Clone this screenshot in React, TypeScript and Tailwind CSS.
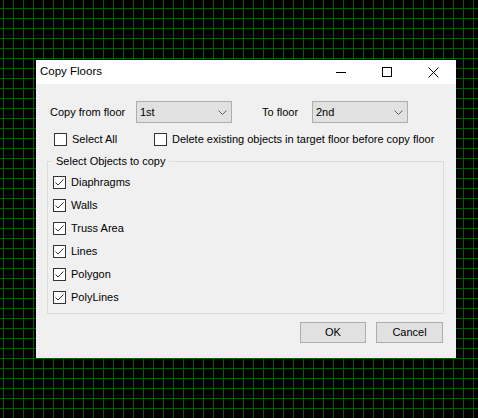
import React from "react";

const items = ["Diaphragms", "Walls", "Truss Area", "Lines", "Polygon", "PolyLines"];

function CheckBox({ checked, label }: { checked?: boolean; label: string }) {
  return (
    <label className="flex h-[13px] items-center">
      <span className="flex h-[13px] w-[13px] items-center justify-center border border-[#333333] bg-white">
        {checked ? (
          <svg width="11" height="11" viewBox="0 0 11 11">
            <path d="M1.5 5.5 L4 8 L9.5 2.5" fill="none" stroke="#333333" strokeWidth="1" />
          </svg>
        ) : null}
      </span>
      <span className="ml-[5px] leading-[13px]">{label}</span>
    </label>
  );
}

function Combo({ value }: { value: string }) {
  return (
    <div className="flex h-[22px] w-[96px] items-center justify-between border border-[#adadad] bg-[#e1e1e1] pl-[3px] pr-[4px]">
      <span>{value}</span>
      <svg width="9" height="5" viewBox="0 0 9 5">
        <path d="M0.5 0.5 L4.5 4.5 L8.5 0.5" fill="none" stroke="#606060" strokeWidth="1" />
      </svg>
    </div>
  );
}

function TitleButton({ children }: { children: React.ReactNode }) {
  return <div className="flex h-[24px] w-[46px] items-center justify-center">{children}</div>;
}

export default function App() {
  return (
    <div className="h-[418px] w-[478px] overflow-hidden bg-black bg-[linear-gradient(to_right,#006000_1px,transparent_1px),linear-gradient(to_bottom,#006000_1px,transparent_1px)] bg-[size:10px_10px] bg-[position:3px_8px] pl-[36px] pt-[60px] font-['Liberation_Sans',Arial,sans-serif] text-[11px] text-black">
      <div className="flex h-[298px] w-[420px] flex-col bg-[#f0f0f0]">
        {/* title bar */}
        <div className="flex h-[24px] items-center justify-between bg-white">
          <span className="pl-[4px] text-[11.5px]">Copy Floors</span>
          <div className="flex">
            <TitleButton>
              <div className="h-px w-[10px] bg-black" />
            </TitleButton>
            <TitleButton>
              <div className="h-[10px] w-[10px] border border-black" />
            </TitleButton>
            <TitleButton>
              <svg width="11" height="11" viewBox="0 0 11 11">
                <path d="M0.5 0.5 L10.5 10.5 M10.5 0.5 L0.5 10.5" stroke="black" strokeWidth="1" />
              </svg>
            </TitleButton>
          </div>
        </div>

        {/* floor pickers */}
        <div className="mt-[17px] flex h-[22px] items-center">
          <span className="ml-[14px] w-[86px]">Copy from floor</span>
          <Combo value="1st" />
          <span className="ml-[30px] w-[50px]">To floor</span>
          <Combo value="2nd" />
        </div>

        <div className="mt-[10px] flex items-center">
          <div className="ml-[18px] w-[100px]">
            <CheckBox label="Select All" />
          </div>
          <CheckBox label="Delete existing objects in target floor before copy floor" />
        </div>

        <fieldset className="ml-[11px] mt-[8px] w-[397px] border border-[#dcdcdc] px-[5px] pb-[9px]">
          <legend className="-ml-px px-[4px] leading-[14px]">Select Objects to copy</legend>
          <div className="mt-[8px] flex flex-col gap-[10px]">
            {items.map((item) => (
              <CheckBox key={item} checked label={item} />
            ))}
          </div>
        </fieldset>

        <div className="mt-[8px] flex justify-end gap-[10px] pr-[13px]">
          <button className="h-[21px] w-[66px] border border-[#adadad] bg-[#e1e1e1]">OK</button>
          <button className="h-[21px] w-[67px] border border-[#adadad] bg-[#e1e1e1]">Cancel</button>
        </div>
      </div>
    </div>
  );
}
